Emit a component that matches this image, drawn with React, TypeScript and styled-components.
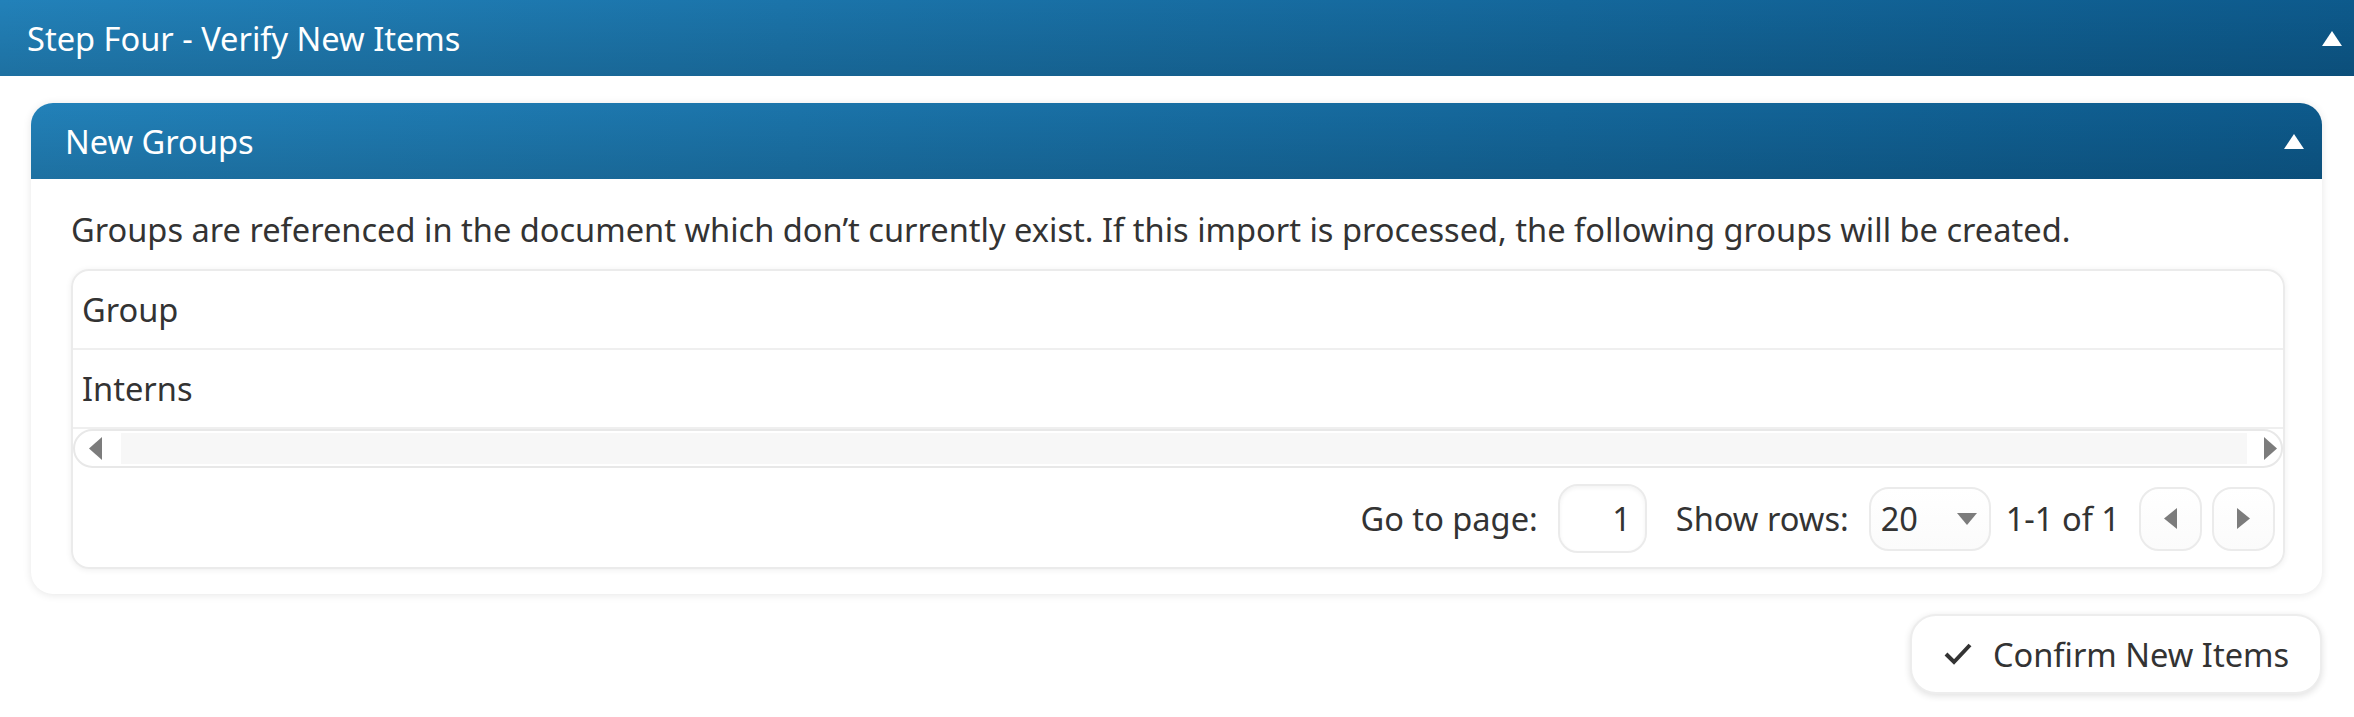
import React from "react";
import styled, { createGlobalStyle } from "styled-components";

const GlobalStyle = createGlobalStyle`
  html, body {
    margin: 0;
    padding: 0;
    background: #ffffff;
  }
  body {
    font-family: "Noto Sans", "Open Sans", "DejaVu Sans", sans-serif;
    font-size: 32.6px;
    color: #333333;
  }
  * {
    box-sizing: border-box;
  }
`;

const blueBar = `
  background:
    linear-gradient(to bottom, rgba(0, 0, 0, 0) 0%, rgba(0, 0, 0, 0.13) 100%),
    linear-gradient(to right, #2281b9 0%, #0d5a8c 100%);
`;

const Page = styled.div`
  width: 100%;
  padding-bottom: 24px;
`;

const StepHeader = styled.div`
  ${blueBar}
  height: 76px;
  display: flex;
  align-items: center;
  justify-content: space-between;
  padding: 0 12px 0 27px;
  color: #ffffff;
`;

const Content = styled.div`
  padding: 27px 32px 0 31px;
`;

const Card = styled.section`
  background: #ffffff;
  border-radius: 22px;
  overflow: hidden;
  box-shadow: 0 1px 8px rgba(0, 0, 0, 0.1);
`;

const CardHeader = styled.div`
  ${blueBar}
  height: 76px;
  display: flex;
  align-items: center;
  justify-content: space-between;
  padding: 0 18px 0 34px;
  color: #ffffff;
`;

const CardBody = styled.div`
  padding: 28px 37px 25px 40px;
`;

const Description = styled.p`
  margin: 0 0 17px;
  line-height: 45px;
`;

const Grid = styled.div`
  border: 2px solid #ebebeb;
  border-radius: 18px;
  overflow: hidden;
  box-shadow: 0 1px 6px rgba(0, 0, 0, 0.07);
`;

const GridRow = styled.div`
  height: 79px;
  display: flex;
  align-items: center;
  padding-left: 9px;
  border-bottom: 2px solid #efefef;
`;

const ScrollBar = styled.div`
  display: flex;
  align-items: stretch;
  height: 39px;
  border: 2px solid #e8e8e8;
  border-radius: 20px;
  overflow: hidden;
`;

const ScrollButton = styled.div<{ $side: "left" | "right" }>`
  width: ${(p) => (p.$side === "left" ? "46px" : "34px")};
  display: flex;
  align-items: center;
  justify-content: ${(p) => (p.$side === "left" ? "flex-start" : "flex-end")};
  padding-left: ${(p) => (p.$side === "left" ? "14px" : "0")};
  padding-right: ${(p) => (p.$side === "right" ? "4px" : "0")};
`;

const ScrollTrack = styled.div`
  flex: 1;
  margin: 2px 0;
  background: #f7f7f7;
`;

const Pager = styled.div`
  display: flex;
  justify-content: flex-end;
  align-items: center;
  padding: 16px 8px 14px;
`;

const PagerLabel = styled.span<{ $gap: number }>`
  margin-right: ${(p) => p.$gap}px;
  white-space: nowrap;
`;

const PageInput = styled.input`
  width: 89px;
  height: 69px;
  margin-right: 29px;
  border: 2px solid #ebebeb;
  border-radius: 20px;
  background: #ffffff;
  box-shadow: inset 0 2px 4px rgba(0, 0, 0, 0.05);
  font: inherit;
  color: #333333;
  text-align: right;
  padding: 0 14px 0 0;
  outline: none;
`;

const RowsSelect = styled.div`
  width: 122px;
  height: 64px;
  margin-right: 15px;
  display: flex;
  align-items: center;
  justify-content: space-between;
  padding: 0 12px 0 10px;
  border: 2px solid #ebebeb;
  border-radius: 20px;
  background: linear-gradient(to bottom, #ffffff, #fbfbfb);
`;

const PageButton = styled.div<{ $last?: boolean }>`
  width: 63px;
  height: 64px;
  margin-left: ${(p) => (p.$last ? "10px" : "19px")};
  display: flex;
  align-items: center;
  justify-content: center;
  border: 2px solid #ebebeb;
  border-radius: 20px;
  background: linear-gradient(to bottom, #ffffff, #fbfbfb);
`;

const Actions = styled.div`
  display: flex;
  justify-content: flex-end;
  padding-top: 20px;
`;

const ConfirmButton = styled.button`
  height: 80px;
  width: 412px;
  display: flex;
  align-items: center;
  justify-content: center;
  gap: 20px;
  border: 2px solid #ededed;
  border-radius: 26px;
  background: #ffffff;
  box-shadow: 0 2px 7px rgba(0, 0, 0, 0.12);
  font: inherit;
  color: #333333;
  cursor: pointer;
`;

type Dir = "up" | "down" | "left" | "right";

const Triangle = ({ dir, w, h, color }: { dir: Dir; w: number; h: number; color: string }) => {
  const pts: Record<Dir, string> = {
    up: `0,${h} ${w / 2},0 ${w},${h}`,
    down: `0,0 ${w},0 ${w / 2},${h}`,
    left: `${w},0 0,${h / 2} ${w},${h}`,
    right: `0,0 ${w},${h / 2} 0,${h}`,
  };
  return (
    <svg width={w} height={h} viewBox={`0 0 ${w} ${h}`} style={{ display: "block" }}>
      <polygon points={pts[dir]} fill={color} />
    </svg>
  );
};

const CheckIcon = () => (
  <svg width="30" height="24" viewBox="0 0 30 24" style={{ display: "block" }}>
    <polyline points="3,12 11,20 27,3" fill="none" stroke="#333" strokeWidth="4" />
  </svg>
);

export default function App() {
  return (
    <Page>
      <GlobalStyle />
      <StepHeader>
        <span>Step Four - Verify New Items</span>
        <Triangle dir="up" w={20} h={15} color="#ffffff" />
      </StepHeader>
      <Content>
        <Card>
          <CardHeader>
            <span>New Groups</span>
            <Triangle dir="up" w={20} h={15} color="#ffffff" />
          </CardHeader>
          <CardBody>
            <Description>
              Groups are referenced in the document which don’t currently exist. If this import is processed, the following groups will be created.
            </Description>
            <Grid>
              <GridRow>Group</GridRow>
              <GridRow>Interns</GridRow>
              <ScrollBar>
                <ScrollButton $side="left">
                  <Triangle dir="left" w={13} h={23} color="#7c7c7c" />
                </ScrollButton>
                <ScrollTrack />
                <ScrollButton $side="right">
                  <Triangle dir="right" w={13} h={23} color="#7c7c7c" />
                </ScrollButton>
              </ScrollBar>
              <Pager>
                <PagerLabel $gap={20}>Go to page:</PagerLabel>
                <PageInput defaultValue="1" readOnly />
                <PagerLabel $gap={20}>Show rows:</PagerLabel>
                <RowsSelect>
                  <span>20</span>
                  <Triangle dir="down" w={20} h={12} color="#7c7c7c" />
                </RowsSelect>
                <span>1-1 of 1</span>
                <PageButton>
                  <Triangle dir="left" w={13} h={21} color="#7c7c7c" />
                </PageButton>
                <PageButton $last>
                  <Triangle dir="right" w={13} h={21} color="#7c7c7c" />
                </PageButton>
              </Pager>
            </Grid>
          </CardBody>
        </Card>
        <Actions>
          <ConfirmButton>
            <CheckIcon />
            <span>Confirm New Items</span>
          </ConfirmButton>
        </Actions>
      </Content>
    </Page>
  );
}
